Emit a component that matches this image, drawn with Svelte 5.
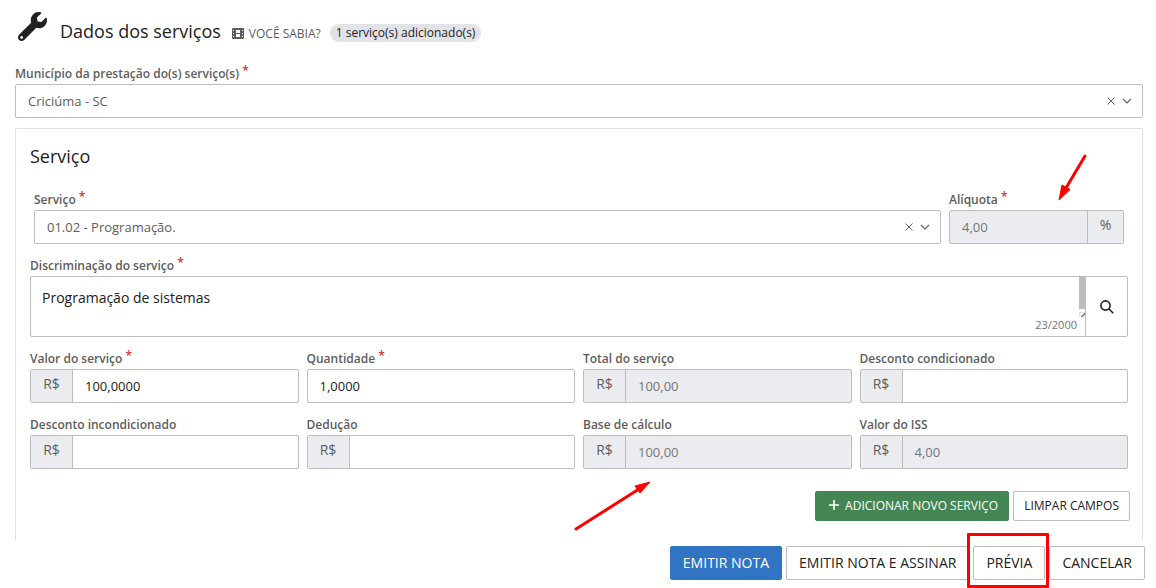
<script lang="ts">
  let city = $state("Criciúma - SC");
  let service = $state("01.02 - Programação.");
  let description = $state("Programação de sistemas");

  const fields = $state([
    { id: "valor", label: "Valor do serviço", value: "100,0000", required: true, prefix: true },
    { id: "quantidade", label: "Quantidade", value: "1,0000", required: true },
    { id: "total", label: "Total do serviço", value: "100,00", prefix: true, disabled: true },
    { id: "condicionado", label: "Desconto condicionado", value: "", prefix: true },
    { id: "incondicionado", label: "Desconto incondicionado", value: "", prefix: true },
    { id: "deducao", label: "Dedução", value: "", prefix: true },
    { id: "base", label: "Base de cálculo", value: "100,00", prefix: true, disabled: true },
    { id: "iss", label: "Valor do ISS", value: "4,00", prefix: true, disabled: true },
  ]);
</script>

{#snippet required()}
  <span class="required">*</span>
{/snippet}

{#snippet chevron()}
  <svg class="chevron" viewBox="0 0 10 10" aria-hidden="true">
    <path d="M1 3l4 4 4-4" />
  </svg>
{/snippet}

{#snippet clearIcon()}
  <svg viewBox="0 0 8 8" aria-hidden="true">
    <path d="M0.500 0.500l7 7M7.500 0.500l-7 7" />
  </svg>
{/snippet}

<main>
  <header>
    <svg class="wrench" viewBox="0 0 512 512" aria-hidden="true">
      <path
        d="M507.73 109.1c-2.24-9.03-13.54-12.09-20.12-5.51l-74.36 74.36-67.88-11.31-11.31-67.88 74.36-74.36c6.62-6.62 3.43-17.9-5.66-20.16-47.38-11.74-99.55.91-136.58 37.93-39.64 39.64-50.55 97.1-34.05 147.2L18.74 402.76c-24.99 24.99-24.99 65.51 0 90.5 24.99 24.99 65.51 24.99 90.5 0l213.21-213.21c50.12 16.71 107.47 5.68 147.37-34.22 37.07-37.07 49.7-89.32 37.91-136.73zM64 472c-13.25 0-24-10.75-24-24 0-13.26 10.75-24 24-24s24 10.74 24 24c0 13.25-10.75 24-24 24z"
      />
    </svg>
    <h1>Dados dos serviços</h1>
    <a class="hint" href="#sabia">
      <svg viewBox="0 0 12 11" aria-hidden="true">
        <path
          fill-rule="evenodd"
          d="M1 0h10a1 1 0 0 1 1 1v9a1 1 0 0 1-1 1H1a1 1 0 0 1-1-1V1a1 1 0 0 1 1-1zM1 2v1h1V2zM1 5v1h1V5zM1 8v1h1V8zM10 2v1h1V2zM10 5v1h1V5zM10 8v1h1V8zM4 2v3h4V2zM4 6v3h4V6z"
        />
      </svg>
      VOCÊ SABIA?
    </a>
    <span class="badge">1 serviço(s) adicionado(s)</span>
  </header>

  <div class="field">
    <label for="municipio">Município da prestação do(s) serviço(s) {@render required()}</label>
    <div class="control">
      <select id="municipio" bind:value={city}>
        <option>Criciúma - SC</option>
      </select>
      <button class="clear" aria-label="Limpar município" onclick={() => (city = "")}>
        {@render clearIcon()}
      </button>
      {@render chevron()}
    </div>
  </div>

  <section class="panel">
    <h2>Serviço</h2>

    <div class="row">
      <div class="field wide">
        <label for="servico">Serviço {@render required()}</label>
        <div class="control">
          <select id="servico" bind:value={service}>
            <option>01.02 - Programação.</option>
          </select>
          <button class="clear" aria-label="Limpar serviço" onclick={() => (service = "")}>
            {@render clearIcon()}
          </button>
          {@render chevron()}
        </div>
      </div>
      <div class="field narrow">
        <label for="aliquota">Alíquota {@render required()}</label>
        <div class="control disabled">
          <input id="aliquota" value="4,00" disabled />
          <span class="addon suffix">%</span>
        </div>
        <svg class="arrow arrow-rate" viewBox="0 0 30 48" aria-hidden="true">
          <path class="shaft" d="M27 3L8 35" />
          <path class="head" d="M1 47L4 32L12 36.500z" />
        </svg>
      </div>
    </div>

    <div class="field">
      <label for="discriminacao">Discriminação do serviço {@render required()}</label>
      <div class="control description">
        <div class="editor">
          <div class="text">
            <textarea id="discriminacao" bind:value={description}></textarea>
            <div class="scroll" aria-hidden="true">
              <span class="thumb"></span>
              <span class="grip"></span>
            </div>
          </div>
          <span class="counter">{description.length}/2000</span>
        </div>
        <button class="search" aria-label="Pesquisar">
          <svg viewBox="0 0 14 14" aria-hidden="true">
            <circle cx="5.500" cy="5.500" r="4.600" />
            <path d="M9 9l4.300 4.300" />
          </svg>
        </button>
      </div>
    </div>

    <div class="grid">
      {#each fields as field}
        <div class="field">
          <label for={field.id}>
            {field.label}
            {#if field.required}{@render required()}{/if}
          </label>
          <div class="control" class:disabled={field.disabled}>
            {#if field.prefix}
              <span class="addon">R$</span>
            {/if}
            <input id={field.id} bind:value={field.value} disabled={field.disabled} />
          </div>
          {#if field.id == "base"}
            <svg class="arrow arrow-base" viewBox="0 0 78 52" aria-hidden="true">
              <path class="shaft" d="M3 49L66 9" />
              <path class="head" d="M77 2L62 6L67 13z" />
            </svg>
          {/if}
        </div>
      {/each}
    </div>

    <div class="actions">
      <button class="btn small add">
        <svg viewBox="0 0 10 10" aria-hidden="true"><path d="M5 0v10M0 5h10" /></svg>
        ADICIONAR NOVO SERVIÇO
      </button>
      <button class="btn small">LIMPAR CAMPOS</button>
    </div>
  </section>

  <footer>
    <button class="btn primary">EMITIR NOTA</button>
    <button class="btn">EMITIR NOTA E ASSINAR</button>
    <div class="highlight">
      <button class="btn">PRÉVIA</button>
    </div>
    <button class="btn">CANCELAR</button>
  </footer>
</main>

<style>
  :global(body) {
    background: white;
    color: #212121;
    font-family: "Open Sans", sans-serif;
    font-size: 13px;
  }

  main {
    padding: 8px 13px 0 15px;
  }
  main * {
    box-sizing: border-box;
  }

  button,
  input,
  select,
  textarea {
    font: inherit;
    color: inherit;
    margin: 0;
    border: none;
    background: none;
    border-radius: 0;
    outline: none;
  }

  header {
    display: flex;
    align-items: center;
    height: 46px;
    margin-bottom: 10px;
  }
  .wrench {
    width: 29px;
    height: 29px;
    margin: 0 13px 10px 3px;
    fill: #212121;
  }
  h1,
  h2 {
    margin: 0;
    font-size: 18px;
    font-weight: 400;
    line-height: 24px;
  }
  .hint {
    display: flex;
    align-items: center;
    gap: 5px;
    margin: 4px 9px 0 11px;
    font-size: 12px;
    color: #5d5d5d;
    text-decoration: none;
  }
  .hint svg {
    width: 12px;
    height: 11px;
    fill: #5d5d5d;
  }
  .badge {
    margin-top: 4px;
    padding: 0 6px;
    border-radius: 9px;
    background: #e2e3e8;
    font-size: 12px;
    line-height: 18px;
  }

  .field {
    position: relative;
    min-width: 0;
  }
  label {
    display: block;
    height: 20px;
    font-size: 12px;
    font-weight: 600;
    line-height: 20px;
    color: #5d5d5d;
    white-space: nowrap;
  }
  .required {
    position: relative;
    top: -3px;
    color: #d32f2f;
  }
  .control {
    display: flex;
    align-items: center;
    height: 34px;
    border: 1px solid #bdbdbd;
    border-radius: 2px;
    background: white;
  }
  .control.disabled {
    background: #ebecf0;
  }
  input,
  select {
    flex: 1;
    min-width: 0;
    height: 100%;
    padding: 0 12px;
  }
  select {
    appearance: none;
    color: #5d5d5d;
  }
  input:disabled {
    color: #757575;
  }
  .addon {
    align-self: stretch;
    width: 42px;
    border-right: 1px solid #bdbdbd;
    background: #ebecf0;
    font-size: 14px;
    line-height: 28px;
    text-align: center;
    color: #5d5d5d;
  }
  .addon.suffix {
    width: 36px;
    border-right: none;
    border-left: 1px solid #bdbdbd;
  }
  .clear {
    display: flex;
    padding: 4px;
  }
  .clear svg {
    width: 8px;
    height: 8px;
  }
  .clear path,
  .chevron path {
    fill: none;
    stroke: #5d6670;
    stroke-width: 1.2;
  }
  .clear path {
    stroke-width: 1;
  }
  .chevron {
    width: 10px;
    height: 10px;
    margin: 0 10px 0 3px;
  }

  .panel {
    margin-top: 10px;
    padding: 15px 14px 19px;
    border: 1px solid #e1e2e6;
    border-bottom: none;
    border-radius: 2px 2px 0 0;
  }
  h2 {
    margin-bottom: 22px;
  }
  .row {
    display: flex;
    margin-bottom: 12px;
  }
  .row .field {
    padding: 0 4px;
  }
  .wide {
    width: calc(100% * 5 / 6);
  }
  .narrow {
    width: calc(100% / 6);
  }

  .description {
    height: 61px;
    align-items: stretch;
  }
  .editor {
    flex: 1;
    display: flex;
    flex-direction: column;
  }
  .text {
    display: flex;
    height: 40px;
  }
  textarea {
    flex: 1;
    padding: 11px 11px 0;
    font-size: 14px;
    line-height: 20px;
    resize: none;
    overflow: hidden;
  }
  .scroll {
    display: flex;
    flex-direction: column;
    gap: 3px;
    width: 6px;
  }
  .thumb {
    height: 32px;
    background: #bdbdbd;
  }
  .grip {
    height: 5px;
    border: 1px solid #e1e2e6;
    border-width: 1px 0 0 1px;
    background: linear-gradient(135deg, #f5f5f5 55%, #757575 55%, #757575 70%, #f5f5f5 70%);
  }
  .counter {
    padding-right: 8px;
    font-size: 11px;
    line-height: 16px;
    text-align: right;
    color: #757575;
  }
  .search {
    display: flex;
    align-items: center;
    justify-content: center;
    width: 42px;
    padding: 0;
    border-left: 1px solid #bdbdbd;
  }
  .search svg {
    width: 14px;
    height: 14px;
    fill: none;
    stroke: #212121;
    stroke-width: 1.6;
  }

  .grid {
    display: grid;
    grid-template-columns: repeat(4, 1fr);
    gap: 12px 8px;
    margin-top: 12px;
  }

  .actions {
    display: flex;
    justify-content: flex-end;
    gap: 4px;
    margin: 22px -2px 0 0;
  }
  .btn {
    display: flex;
    align-items: center;
    height: 34px;
    padding: 0 12px 2px;
    border: 1px solid #bdbdbd;
    border-radius: 2px;
    background: white;
    font-size: 14px;
    white-space: nowrap;
  }
  .btn.small {
    height: 30px;
    padding: 0 10px 2px;
    font-size: 12px;
  }
  .btn.add {
    gap: 6px;
    padding-left: 13px;
    border-color: #438654;
    background: #438654;
    color: white;
  }
  .add svg {
    width: 10px;
    height: 10px;
    stroke: white;
    stroke-width: 1.6;
  }
  .btn.primary {
    border-color: #3174c3;
    background: #3174c3;
    color: white;
  }

  footer {
    display: flex;
    justify-content: flex-end;
    gap: 4px;
    margin: 6px -2px 8px 0;
  }
  .highlight {
    position: relative;
  }
  .highlight::after {
    content: "";
    position: absolute;
    z-index: 1;
    inset: -13px -4px -8px -6px;
    border: 3px solid #ff0000;
    border-radius: 1px;
    pointer-events: none;
  }

  .arrow {
    position: absolute;
    z-index: 1;
    pointer-events: none;
  }
  .arrow .shaft {
    stroke: #ff0000;
    stroke-width: 3;
    stroke-linecap: round;
  }
  .arrow .head {
    fill: #ff0000;
    stroke: #ff0000;
  }
  .arrow-rate {
    top: -37px;
    left: 113px;
    width: 30px;
    height: 48px;
  }
  .arrow-base {
    top: 65px;
    left: -10px;
    width: 78px;
    height: 52px;
  }
</style>
